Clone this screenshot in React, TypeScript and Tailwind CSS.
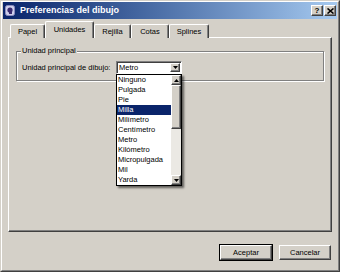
import React from 'react';

const units = [
  'Ninguno',
  'Pulgada',
  'Pie',
  'Milla',
  'Milímetro',
  'Centímetro',
  'Metro',
  'Kilómetro',
  'Micropulgada',
  'Mil',
  'Yarda',
];

const tabs = [
  { label: 'Papel', w: 'w-[35px]' },
  { label: 'Unidades', w: 'w-[49px]', active: true },
  { label: 'Rejilla', w: 'w-[37px]' },
  { label: 'Cotas', w: 'w-[38px]' },
  { label: 'Splines', w: 'w-[40px]' },
];

const raised =
  'border border-t-white border-l-white border-r-[#404040] border-b-[#404040] shadow-[inset_-1px_-1px_0_#808080]';

const Arrow = ({ up }: { up?: boolean }) => (
  <svg width="5" height="3" viewBox="0 0 5 3" className={up ? 'rotate-180' : ''}>
    <path d="M0 0h5L2.5 3z" fill="#000" />
  </svg>
);

const TitleButton = ({ children }: { children: React.ReactNode }) => (
  <div
    className={`${raised} w-[12px] h-[11px] bg-[#d4d0c8] flex items-center justify-center text-[8px] font-bold leading-none text-black`}
  >
    {children}
  </div>
);

const Button = ({ label, isDefault }: { label: string; isDefault?: boolean }) => (
  <div className={isDefault ? 'border border-black' : 'border border-transparent'}>
    <div
      className={`${raised} w-[52px] h-[15px] bg-[#d4d0c8] flex items-center justify-center text-[7.5px] text-black`}
    >
      {label}
    </div>
  </div>
);

export default function App() {
  return (
    <div
      className="w-[340px] h-[272px] bg-[#d4d0c8] border border-t-[#d4d0c8] border-l-[#d4d0c8] border-r-[#404040] border-b-[#404040]"
      style={{ fontFamily: '"Liberation Sans", Arial, sans-serif' }}
    >
      <div className="h-full flex flex-col border border-t-white border-l-white border-r-[#808080] border-b-[#808080]">
        {/* title bar */}
        <div className="h-[17px] mx-px flex items-center pl-[2px] pr-[1px] bg-gradient-to-r from-[#0a246a] to-[#a6caf0]">
          <svg width="10" height="11" viewBox="0 0 10 11" className="shrink-0">
            <rect x="0.5" y="0.5" width="9" height="10" rx="2" fill="#cfcfea" stroke="#8c8cc0" />
            <circle cx="5" cy="5" r="2.6" fill="#3a2a70" />
            <rect x="4" y="7" width="3" height="2" fill="#3a2a70" />
          </svg>
          <span className="ml-[5px] text-[9px] font-bold text-white leading-none">Preferencias del dibujo</span>
          <div className="ml-auto flex gap-px">
            <TitleButton>?</TitleButton>
            <TitleButton>
              <svg width="7" height="6" viewBox="0 0 7 6">
                <path d="M0.5 0.5l6 5M6.5 0.5l-6 5" stroke="#000" strokeWidth="1.6" />
              </svg>
            </TitleButton>
          </div>
        </div>

        {/* tabs + pane */}
        <div className="px-[6px] mt-[2px]">
          <div className="relative z-10 -mb-px flex items-end h-[17px] pl-[2px]">
            {tabs.map((t) => (
              <div
                key={t.label}
                className={`${t.w} ${
                  t.active ? 'h-[17px] pt-[4px]' : 'h-[14px] pt-[3px]'
                } bg-[#d4d0c8] rounded-t-[2px] border-t border-l border-r border-t-white border-l-white border-r-[#404040] shadow-[inset_-1px_0_0_#808080] flex items-start justify-center text-[7.5px] text-black leading-none`}
              >
                {t.label}
              </div>
            ))}
          </div>
          <div className="h-[195px] border border-t-white border-l-white border-r-[#404040] border-b-[#404040] shadow-[inset_-1px_-1px_0_#808080] pt-[13px] pl-[7px] pr-[7px]">
            {/* group box */}
            <div className="relative border border-[#808080] shadow-[inset_1px_1px_0_white,1px_1px_0_white] pt-[9px] pb-[6px] pl-[5px]">
              <span className="absolute -top-[6px] left-[4px] px-[1px] bg-[#d4d0c8] text-[7.5px] leading-[10px] text-black">
                Unidad principal
              </span>
              <div className="flex items-center">
                <span className="w-[94px] shrink-0 whitespace-nowrap text-[7.5px] leading-none text-black">
                  Unidad principal de dibujo:
                </span>
                <div className="relative">
                  <div className="w-[66px] h-[13px] bg-white border border-t-[#808080] border-l-[#808080] border-r-white border-b-white shadow-[inset_1px_1px_0_#404040] flex items-center pl-[2px] pr-px">
                    <span className="text-[7.5px] leading-none text-black">Metro</span>
                    <div
                      className={`${raised} ml-auto w-[10px] h-[9px] bg-[#d4d0c8] flex items-center justify-center`}
                    >
                      <Arrow />
                    </div>
                  </div>
                  {/* dropdown list */}
                  <div className="absolute top-[13px] left-0 z-20 w-[66px] bg-white border border-black flex shadow-[2px_2px_2px_rgba(0,0,0,0.55)]">
                    <div className="flex-1 flex flex-col">
                      {units.map((u) => (
                        <div
                          key={u}
                          className={`h-[10px] flex items-center pl-[1px] text-[7.5px] leading-none ${
                            u === 'Milla' ? 'bg-[#0a246a] text-white' : 'text-black'
                          }`}
                        >
                          {u}
                        </div>
                      ))}
                    </div>
                    <div className="w-[10px] flex flex-col bg-[#ebe9e4]">
                      <div className={`${raised} h-[10px] bg-[#d4d0c8] flex items-center justify-center`}>
                        <Arrow up />
                      </div>
                      <div className={`${raised} h-[44px] bg-[#d4d0c8]`} />
                      <div className="flex-1" />
                      <div className={`${raised} h-[10px] bg-[#d4d0c8] flex items-center justify-center`}>
                        <Arrow />
                      </div>
                    </div>
                  </div>
                </div>
              </div>
            </div>
          </div>
        </div>

        {/* buttons */}
        <div className="flex justify-end gap-[5px] px-[6px] mt-[12px]">
          <Button label="Aceptar" isDefault />
          <Button label="Cancelar" />
        </div>
      </div>
    </div>
  );
}
